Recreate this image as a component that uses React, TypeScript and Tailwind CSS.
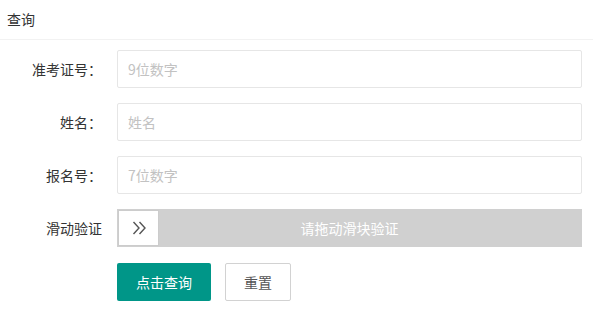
import { useState } from "react";

const font = { fontFamily: '"Noto Sans CJK SC", "Noto Sans", sans-serif' };

function Field({ label, placeholder }: { label: string; placeholder: string }) {
  const [value, setValue] = useState("");
  return (
    <div className="flex mb-[15px]">
      <label className="w-[110px] shrink-0 pr-[15px] text-right text-[14px] leading-[38px] text-[#333]">
        {label}
      </label>
      <input
        type="text"
        value={value}
        onChange={(e) => setValue(e.target.value)}
        placeholder={placeholder}
        className="flex-1 h-[38px] border border-[#e6e6e6] rounded-[2px] px-[10px] text-[14px] text-[#333] placeholder:text-[#c2c2c2] focus:outline-none"
      />
    </div>
  );
}

export default function App() {
  return (
    <div className="w-[593px] h-[319px] bg-white" style={font}>
      <div className="h-[40px] border-b border-[#f2f2f2] px-[7px] text-[14px] leading-[39px] text-[#333]">
        查询
      </div>
      <form className="pt-[10px] pl-[7px] pr-[11px]" onSubmit={(e) => e.preventDefault()}>
        <Field label="准考证号：" placeholder="9位数字" />
        <Field label="姓名：" placeholder="姓名" />
        <Field label="报名号：" placeholder="7位数字" />

        <div className="flex mb-[16px] mt-[1px]">
          <label className="w-[110px] shrink-0 pr-[15px] text-right text-[14px] leading-[38px] text-[#333]">
            滑动验证
          </label>
          <div className="relative flex-1 h-[38px] bg-[#d0d0d0] border border-[#d0d0d0]">
            <div className="absolute inset-0 flex items-center justify-center text-[14px] text-white">
              请拖动滑块验证
            </div>
            <div className="absolute left-0 top-0 h-full w-[41px] bg-white border border-[#ccc] flex items-center justify-center pl-[1px]">
              <svg width="15" height="14" viewBox="0 0 15 14" fill="none" stroke="#555" strokeWidth="1.4">
                <path d="M1.5 1 L7 7 L1.5 13" />
                <path d="M7.5 1 L13 7 L7.5 13" />
              </svg>
            </div>
          </div>
        </div>

        <div className="flex pl-[110px] gap-[14px]">
          <button
            type="submit"
            className="h-[38px] w-[94px] rounded-[2px] bg-[#009688] text-white text-[14px]"
          >
            点击查询
          </button>
          <button
            type="reset"
            className="h-[38px] w-[66px] rounded-[2px] border border-[#d2d2d2] bg-white text-[#555] text-[14px]"
          >
            重置
          </button>
        </div>
      </form>
    </div>
  );
}
